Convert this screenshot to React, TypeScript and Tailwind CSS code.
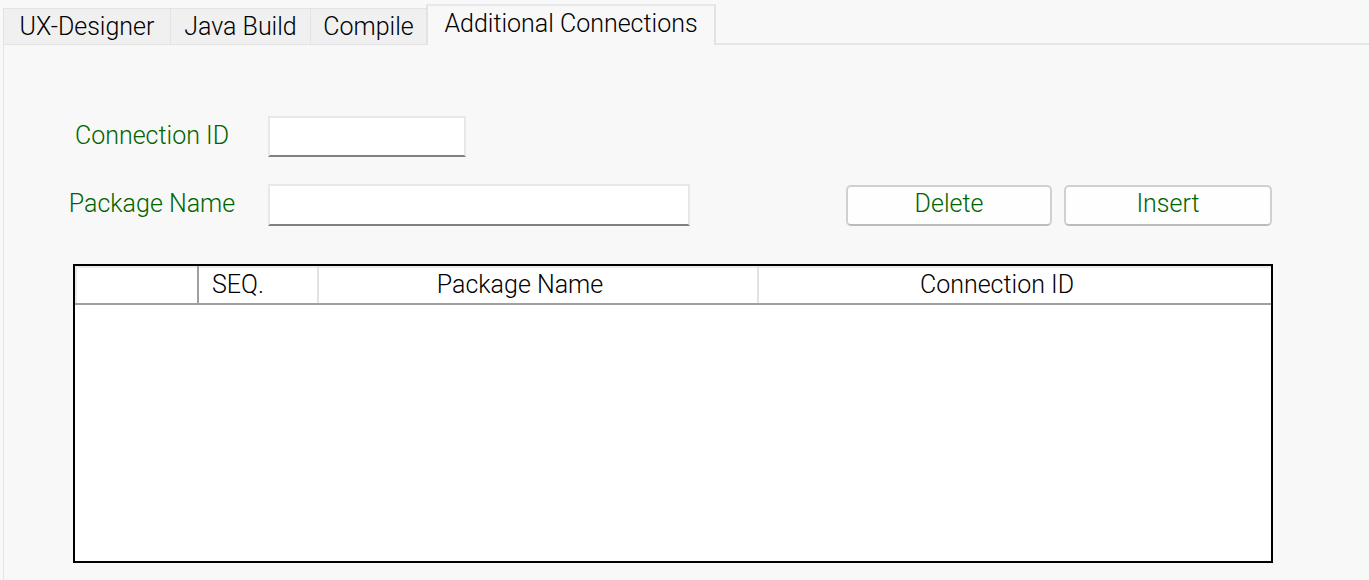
const tabs = [
  { label: "UX-Designer", w: "w-[167px]" },
  { label: "Java Build", w: "w-[140px]" },
  { label: "Compile", w: "w-[116px]" },
];

function TextBox({ className }: { className: string }) {
  return (
    <div
      className={`h-[41px] bg-white border-2 border-[#e8e8e8] border-b-[#808080] ${className}`}
    />
  );
}

function Button({ label, className }: { label: string; className: string }) {
  return (
    <button
      className={`h-[41px] pb-[3px] rounded-[5px] border-2 border-[#d0d0d0] border-b-[#bcbcbc] bg-[#fefefe] text-[#006400] flex items-center justify-center ${className}`}
    >
      {label}
    </button>
  );
}

export default function App() {
  return (
    <main
      className="w-[1369px] h-[580px] overflow-hidden bg-[#f8f8f8] text-[25px] font-light leading-none text-black"
      style={{ fontFamily: "Roboto, 'Liberation Sans', sans-serif" }}
    >
      {/* tab strip */}
      <div className="flex items-end h-[45px] pl-[3px]">
        {tabs.map((t) => (
          <div
            key={t.label}
            className={`${t.w} h-[37px] flex items-center justify-center bg-[#f0f0f0] border border-[#e3e3e3] border-r-0 first:border-l`}
          >
            {t.label}
          </div>
        ))}
        <div className="w-[290px] h-[41px] flex items-center justify-center pb-[5px] bg-[#f8f8f8] border-2 border-b-0 border-[#e3e3e3] border-t-[#e8e8e8]">
          Additional Connections
        </div>
        <div className="flex-1 border-b-2 border-[#e6e6e6]" />
      </div>

      {/* panel */}
      <section className="ml-[3px] h-full border-l border-[#e6e6e6] pt-[71px]">
        <div className="flex items-center">
          <div className="ml-[50px] w-[196px] pb-[3px] text-center text-[#006400]">Connection ID</div>
          <TextBox className="ml-[18px] w-[198px]" />
        </div>

        <div className="flex items-center mt-[27px]">
          <div className="ml-[50px] w-[196px] pb-[3px] text-center text-[#006400]">Package Name</div>
          <TextBox className="ml-[18px] w-[422px] h-[42px]" />
          <Button label="Delete" className="ml-[156px] w-[206px]" />
          <Button label="Insert" className="ml-[12px] w-[208px]" />
        </div>

        <div className="ml-[69px] mt-[38px] w-[1200px] h-[299px] border-2 border-black bg-white">
          <div className="flex h-[39px] border-b-2 border-[#a0a0a0] shadow-[inset_2px_2px_0_#ebebeb]">
            <div className="w-[124px] border-r-2 border-[#a0a0a0]" />
            <div className="w-[120px] border-r-2 border-[#e2e2e2] pl-[13px] flex items-center">SEQ.</div>
            <div className="w-[440px] border-r-2 border-[#e2e2e2] pr-[36px] flex items-center justify-center">
              Package Name
            </div>
            <div className="flex-1 pr-[36px] flex items-center justify-center">Connection ID</div>
          </div>
        </div>
      </section>
    </main>
  );
}
